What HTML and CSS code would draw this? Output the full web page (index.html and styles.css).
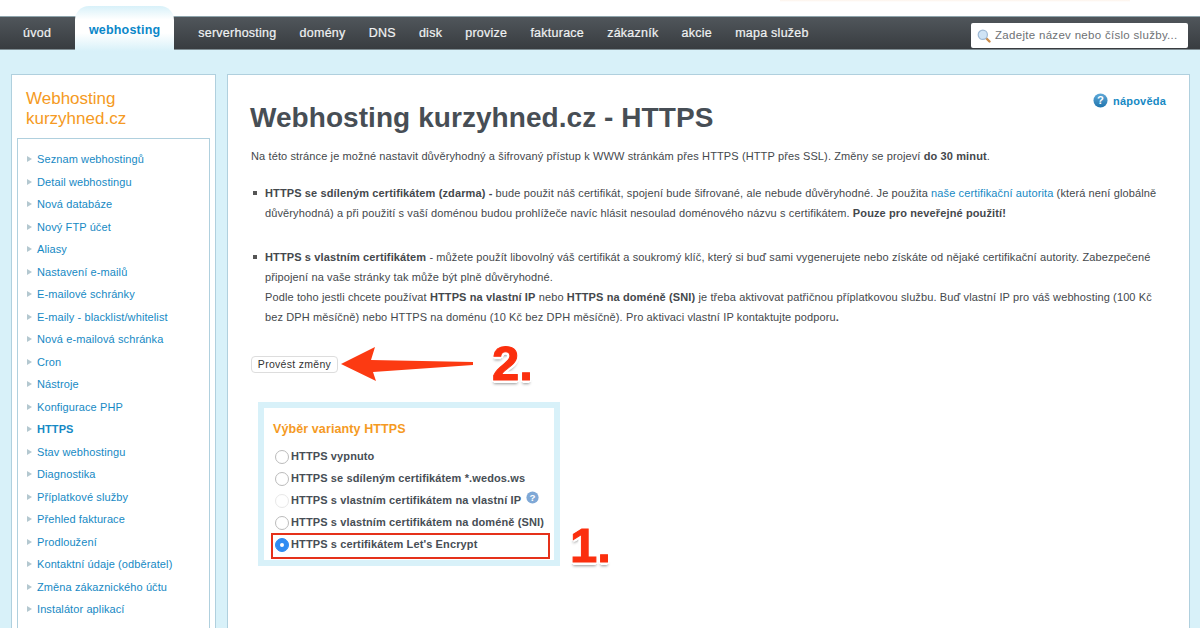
FILE: index.html
```html
<!DOCTYPE html>
<html lang="cs">
<head>
<meta charset="utf-8">
<title>Webhosting kurzyhned.cz - HTTPS</title>
<link rel="stylesheet" href="styles.css">
</head>
<body>
<div class="top"></div>
<nav class="nav">
  <a class="nav-item first">úvod</a>
  <a class="nav-tab">webhosting</a>
  <a class="nav-item">serverhosting</a>
  <a class="nav-item">domény</a>
  <a class="nav-item">DNS</a>
  <a class="nav-item">disk</a>
  <a class="nav-item">provize</a>
  <a class="nav-item">fakturace</a>
  <a class="nav-item">zákazník</a>
  <a class="nav-item">akcie</a>
  <a class="nav-item">mapa služeb</a>
  <div class="search">
    <svg class="search-icon" viewBox="0 0 14 14" width="14" height="14"><line x1="8.5" y1="8.5" x2="12.5" y2="12.5" stroke="#c98b4a" stroke-width="2.4" stroke-linecap="round"/><circle cx="5.8" cy="5.8" r="4.6" fill="#cfe3f5" stroke="#9db8d4" stroke-width="1.2"/></svg>
    <span>Zadejte název nebo číslo služby...</span>
  </div>
</nav>
<div class="page">
  <aside class="side">
    <h2 class="side-title">Webhosting<br>kurzyhned.cz</h2>
    <ul class="menu">
      <li>Seznam webhostingů</li>
      <li>Detail webhostingu</li>
      <li>Nová databáze</li>
      <li>Nový FTP účet</li>
      <li>Aliasy</li>
      <li>Nastavení e-mailů</li>
      <li>E-mailové schránky</li>
      <li>E-maily - blacklist/whitelist</li>
      <li>Nová e-mailová schránka</li>
      <li>Cron</li>
      <li>Nástroje</li>
      <li>Konfigurace PHP</li>
      <li class="active">HTTPS</li>
      <li>Stav webhostingu</li>
      <li>Diagnostika</li>
      <li>Příplatkové služby</li>
      <li>Přehled fakturace</li>
      <li>Prodloužení</li>
      <li>Kontaktní údaje (odběratel)</li>
      <li>Změna zákaznického účtu</li>
      <li>Instalátor aplikací</li>
      <li>Hromadná instalace aplikací</li>
    </ul>
  </aside>
  <main class="main">
    <a class="help">
      <svg viewBox="0 0 16 16" width="15" height="15"><defs><linearGradient id="hg" x1="0" y1="0" x2="0" y2="1"><stop offset="0" stop-color="#5fa9d8"/><stop offset="1" stop-color="#1f74ad"/></linearGradient></defs><circle cx="8" cy="8" r="7.5" fill="url(#hg)"/><text x="8" y="12" text-anchor="middle" class="help-q">?</text></svg>
      nápověda
    </a>
    <h1 class="title">Webhosting kurzyhned.cz - HTTPS</h1>
    <p class="intro">Na této stránce je možné nastavit důvěryhodný a šifrovaný přístup k WWW stránkám přes HTTPS (HTTP přes SSL). Změny se projeví <b>do 30 minut</b>.</p>
    <ul class="notes">
      <li><b>HTTPS se sdíleným certifikátem (zdarma) -</b> bude použit náš certifikát, spojení bude šifrované, ale nebude důvěryhodné. Je použita <a>naše certifikační autorita</a> (která není globálně důvěryhodná) a při použití s vaší doménou budou prohlížeče navíc hlásit nesoulad doménového názvu s certifikátem. <b>Pouze pro neveřejné použití!</b></li>
      <li><b>HTTPS s vlastním certifikátem</b> - můžete použít libovolný váš certifikát a soukromý klíč, který si buď sami vygenerujete nebo získáte od nějaké certifikační autority. Zabezpečené připojení na vaše stránky tak může být plně důvěryhodné.<br>Podle toho jestli chcete používat <b>HTTPS na vlastní IP</b> nebo <b>HTTPS na doméně (SNI)</b> je třeba aktivovat patřičnou příplatkovou službu. Buď vlastní IP pro váš webhosting (100 Kč bez DPH měsíčně) nebo HTTPS na doménu (10 Kč bez DPH měsíčně). Pro aktivaci vlastní IP kontaktujte podporu<b>.</b></li>
    </ul>
    <button class="submit" type="button">Provést změny</button>
    <section class="variants">
      <h3 class="variants-title">Výběr varianty HTTPS</h3>
      <label class="opt"><i class="radio"></i>HTTPS vypnuto</label>
      <label class="opt"><i class="radio"></i>HTTPS se sdíleným certifikátem *.wedos.ws</label>
      <label class="opt"><i class="radio off"></i>HTTPS s vlastním certifikátem na vlastní IP
        <svg class="opt-help" viewBox="0 0 16 16" width="13" height="13"><circle cx="8" cy="8" r="7.5" fill="#7fa8d6"/><text x="8" y="12" text-anchor="middle" class="help-q">?</text></svg>
      </label>
      <label class="opt"><i class="radio"></i>HTTPS s vlastním certifikátem na doméně (SNI)</label>
      <label class="opt chosen"><i class="radio on"></i>HTTPS s certifikátem Let's Encrypt</label>
    </section>
    <svg class="arrow" viewBox="0 0 134 36" width="134" height="36"><path d="M1 18 L35 1 L31 14 L133 16 L133 19 L33 26 L36 35 Z" fill="#fc3a12"/></svg>
    <span class="mark mark-2">2.</span>
    <span class="mark mark-1">1.</span>
  </main>
</div>
</body>
</html>
```
FILE: styles.css
```css
* { box-sizing: border-box; }
html, body { margin: 0; height: 628px; overflow: hidden; }
body { background: #d8f1f9; font-family: "Liberation Sans", Arial, sans-serif; color: #44484c; }
.top { height: 16px; background: #fff linear-gradient(#fdf3ea, #fff) no-repeat 780px 0 / 350px 2px; }
.nav {
  height: 34px; display: flex; align-items: center; padding-right: 12px;
  background: linear-gradient(#50565b, #383c40);
  border-top: 1px solid #8fa5ad; border-bottom: 1px solid #7f8d93;
}
.nav-item { color: #f0f2f3; font-size: 12.5px; line-height: 30px; margin-left: 23.1px; letter-spacing: 0.25px; -webkit-text-stroke: 0.2px #f0f2f3; }
.nav-item.first { margin-left: 23px; margin-right: 24px; }
.nav-tab {
  width: 99px; height: 45px; margin-top: -13px; margin-bottom: -3px; margin-right: 1px;
  padding-top: 9px; text-align: center; color: #0a87c9; font-size: 12.5px; font-weight: bold; line-height: 30px; letter-spacing: 0.2px;
  background: linear-gradient(#d8f1f9, #fff 30%, #fff 60%, #d8f1f9);
  border-radius: 14px 14px 0 0;
}
.search {
  margin-left: auto; width: 217px; height: 25px; margin-top: 5px; background: #fff; border-radius: 2px;
  display: flex; align-items: center; gap: 4px; padding-left: 6px;
  color: #6e7175; font-size: 11.5px; letter-spacing: 0.3px;
}
.search span { margin-top: -1px; }
.search-icon { flex: none; }
.page { display: flex; align-items: flex-start; gap: 11px; padding: 24px 11px 0; }
.side { width: 205px; flex: none; background: #fff; border: 1px solid #b0d0de; padding: 14px 5px 0; }
.side-title { margin: 0 0 10px 9px; color: #f59a23; font-size: 17px; font-weight: normal; line-height: 19.5px; }
.menu { list-style: none; margin: 0; padding: 9px 0 0 19px; border: 1px solid #b0d0de; }
.menu li { position: relative; height: 22.5px; line-height: 22px; color: #1689c4; font-size: 11px; letter-spacing: 0.1px; }
.menu li::before {
  content: ""; position: absolute; left: -10px; top: 8px;
  border-left: 5px solid #b4c8d0; border-top: 3.5px solid transparent; border-bottom: 3.5px solid transparent;
}
.menu li.active { font-weight: bold; }
.main { position: relative; width: 963px; flex: none; height: 620px; background: #fff; border: 1px solid #b0d0de; padding: 0 22px; }
.help { position: absolute; top: 18px; right: 23px; display: flex; align-items: center; gap: 5px; color: #1689c4; font-size: 11px; font-weight: bold; letter-spacing: 0.2px; }
.help-q { font-family: "Liberation Sans", sans-serif; font-size: 12px; font-weight: bold; fill: #fff; }
.title { margin: 26px 0 0; font-size: 28px; line-height: 33px; color: #474e55; font-weight: bold; letter-spacing: 0.06px; }
.intro { margin: 12px 0 0; font-size: 11px; line-height: 21px; letter-spacing: 0.12px; padding-left: 1px; }
.notes { list-style: none; margin: 16px 0 0; padding: 0 10px 0 15px; font-size: 11px; line-height: 20.3px; letter-spacing: 0.12px; }
.notes li { position: relative; margin-bottom: 23px; }
.notes li::before { content: ""; position: absolute; left: -12px; top: 8px; width: 4px; height: 4px; background: #555; }
.notes a { color: #1689c4; }
.submit {
  display: block; width: 87px; height: 17px; margin: 28px 0 0 1px; padding: 0; background: #fff;
  border: 1px solid #ddd; border-radius: 4px; font: 10.5px "Liberation Sans", sans-serif; letter-spacing: 0.3px; color: #333;
}
.variants { width: 302px; height: 164px; margin: 29px 0 0 8px; border: 6px solid #d8f1f9; padding: 13px 0 0 9px; }
.variants-title { margin: 0 0 8px; font-size: 12.5px; line-height: 16px; color: #f59a23; font-weight: bold; letter-spacing: 0.1px; }
.opt { position: relative; display: flex; align-items: center; height: 22px; font-size: 11px; font-weight: bold; letter-spacing: 0.12px; color: #474e55; }
.radio { width: 14px; height: 14px; border-radius: 50%; border: 1px solid #bbb; background: #fff; margin: 2px 2px 0 2px; flex: none; }
.radio.off { border-color: #e8e8e8; }
.radio.on { background: #2f8cf2; border-color: #2f8cf2; position: relative; }
.radio.on::after { content: ""; position: absolute; left: 4px; top: 4px; width: 4px; height: 4px; border-radius: 50%; background: #fff; }
.opt-help { margin: -4px 0 0 5px; }
.chosen::before { content: ""; position: absolute; left: -2px; right: 4px; top: 0; bottom: -4px; border: 2px solid #e5311a; }
.arrow { position: absolute; left: 112px; top: 271px; }
.mark {
  position: absolute; font-weight: bold; font-size: 49px; line-height: 50px;
  color: #fb2f0e; -webkit-text-stroke: 1px #fb2f0e;
  text-shadow: -3px 0 #fff, 3px 0 #fff, 0 -3px #fff, 0 3px #fff, -2px -2px #fff, 2px -2px #fff, -2px 2px #fff, 2px 2px #fff, 0 4px 3px rgba(0,0,0,.4);
}
.mark-2 { left: 264px; top: 263px; }
.mark-1 { left: 342px; top: 445px; }
```
